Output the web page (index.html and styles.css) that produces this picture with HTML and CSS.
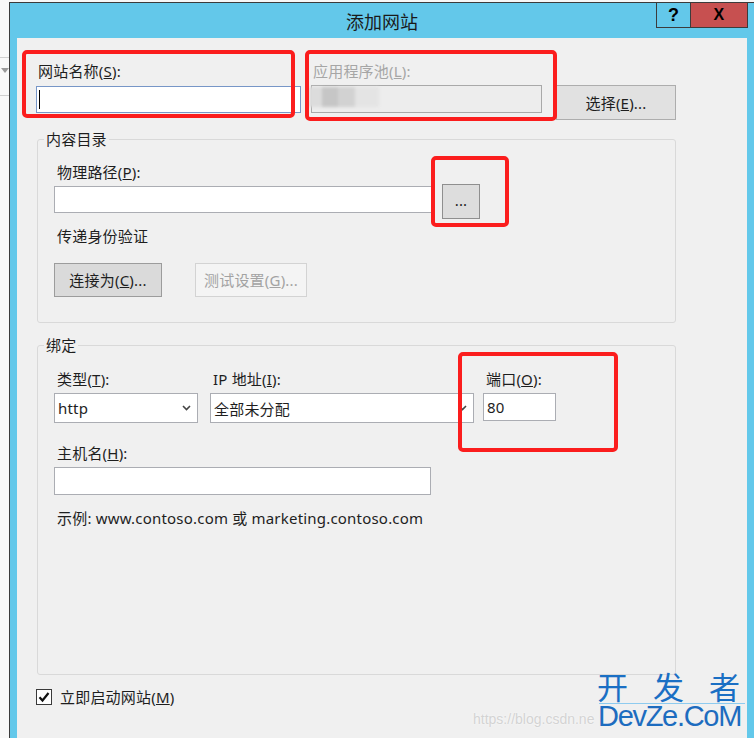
FILE: index.html
```html
<!DOCTYPE html>
<html lang="zh-CN">
<head>
<meta charset="utf-8">
<title>添加网站</title>
<link rel="stylesheet" href="styles.css">
</head>
<body>
<div class="screen">
  <div class="strip">
    <div class="strip-line"></div>
    <div class="strip-arrow"></div>
    <div class="strip-line second"></div>
  </div>
  <div class="window">
    <div class="titlebar">
      <div class="title">添加网站</div>
      <div class="caption">
        <div class="cap-btn help">?</div>
        <div class="cap-btn close">X</div>
      </div>
    </div>
    <div class="frame">
      <div class="client">
        <div class="top-grid">
          <div class="lbl">网站名称(<u>S</u>):</div>
          <div class="lbl disabled">应用程序池(<u>L</u>):</div>
          <div></div>
          <div class="input focused"><span class="caret"></span></div>
          <div class="input readonly"><span class="blur"></span></div>
          <div class="btn choose">选择(<u>E</u>)...</div>
        </div>

        <fieldset class="group content-dir">
          <legend>内容目录</legend>
          <div class="lbl">物理路径(<u>P</u>):</div>
          <div class="path-row">
            <div class="input path"></div>
            <div class="btn browse">...</div>
          </div>
          <div class="lbl pass">传递身份验证</div>
          <div class="btn-row">
            <div class="btn pressed">连接为(<u>C</u>)...</div>
            <div class="btn off">测试设置(<u>G</u>)...</div>
          </div>
        </fieldset>

        <fieldset class="group binding">
          <legend>绑定</legend>
          <div class="bind-grid">
            <div class="lbl">类型(<u>T</u>):</div>
            <div class="lbl">IP 地址(<u>I</u>):</div>
            <div class="lbl">端口(<u>O</u>):</div>
            <div class="select type"><span>http</span><svg class="chev" width="9" height="6" viewBox="0 0 9 6"><path d="M1 1l3.5 3.5L8 1" fill="none" stroke="#444" stroke-width="1.6"/></svg></div>
            <div class="select ip"><span>全部未分配</span><svg class="chev" width="9" height="6" viewBox="0 0 9 6"><path d="M1 1l3.5 3.5L8 1" fill="none" stroke="#444" stroke-width="1.6"/></svg></div>
            <div class="input port">80</div>
          </div>
          <div class="lbl host-lbl">主机名(<u>H</u>):</div>
          <div class="input host"></div>
          <div class="lbl example">示例: www.contoso.com 或 marketing.contoso.com</div>
        </fieldset>

        <div class="start-row">
          <svg class="check" width="16" height="16" viewBox="0 0 16 16">
            <rect x="0.5" y="0.5" width="15" height="15" fill="#fff" stroke="#3a3a3a"/>
            <path d="M3.5 8.2l3 3.3 6-7.5" fill="none" stroke="#111" stroke-width="2.2"/>
          </svg>
          <span class="start-lbl">立即启动网站(<u>M</u>)</span>
        </div>
      </div>
    </div>
  </div>

  <div class="mark r1"></div>
  <div class="mark r2"></div>
  <div class="mark r3"></div>
  <div class="mark r4"></div>

  <div class="csdn">https://blog.csdn.ne</div>
  <div class="wm-cn"><span>开</span><span>发</span><span>者</span></div>
  <div class="wm-line"></div>
  <div class="wm-en">DevZe.CoM</div>
</div>
</body>
</html>
```

FILE: styles.css
```css
* { box-sizing: border-box; }

html, body {
  margin: 0;
  padding: 0;
}

body {
  width: 754px;
  height: 738px;
  overflow: hidden;
  background: #f7f7f7;
  font-family: "Noto Sans", "Noto Sans CJK SC", sans-serif;
  font-size: 15px;
  letter-spacing: 0.2px;
  color: #1e1e1e;
}

.screen {
  position: relative;
  display: flex;
  width: 754px;
  height: 738px;
  overflow: hidden;
}

/* background window sliver */
.strip {
  flex: none;
  width: 9px;
  background: #f8f8f8;
  padding-top: 57px;
}
.strip-line { height: 1px; background: #cfcfcf; }
.strip-line.second { margin-top: 22px; }
.strip-arrow {
  margin: 10px 0 0 1px;
  width: 0;
  height: 0;
  border-left: 4px solid transparent;
  border-right: 4px solid transparent;
  border-top: 5px solid #9a9a9a;
}

/* window frame */
.window {
  flex: none;
  width: 745px;
  margin-top: 2px;
  border-left: 1px solid #3b3b3b;
  border-top: 1px solid #3b3b3b;
  background: #63c8ea;
}

.titlebar {
  height: 35px;
  display: grid;
  grid-template-columns: 1fr auto 1fr;
  align-items: center;
}
.title {
  grid-column: 2;
  font-family: "Noto Sans CJK SC", sans-serif;
  font-size: 18px;
  line-height: 24px;
  letter-spacing: 0;
  color: #1a1a1a;
}
.caption {
  grid-column: 3;
  justify-self: end;
  align-self: start;
  margin-right: 6px;
  display: flex;
  height: 25px;
  border: 1px solid #3c3c3c;
  border-top: none;
}
.cap-btn {
  display: flex;
  align-items: center;
  justify-content: center;
  font-family: "Liberation Sans", sans-serif;
  font-weight: bold;
  color: #000;
}
.help {
  width: 34px;
  border-right: 1px solid #3c3c3c;
  font-size: 18px;
}
.close {
  width: 56px;
  background: #c75050;
  font-size: 16px;
}

.frame {
  height: 700px;
  padding: 0 7px;
}
.client {
  height: 700px;
  background: #f0f0f0;
  padding-top: 23px;
}

/* common controls */
.lbl {
  line-height: 20px;
  padding-left: 2px;
  white-space: nowrap;
}
.disabled { color: #a6a6a6; }

.input {
  background: #fff;
  border: 1px solid #abadb3;
  height: 27px;
}
.btn {
  display: flex;
  align-items: center;
  justify-content: center;
  height: 35px;
  border: 1px solid #adadad;
  background: #e1e1e1;
  line-height: 20px;
  white-space: nowrap;
}

/* top row */
.top-grid {
  display: grid;
  grid-template-columns: 265px 231px 124px;
  column-gap: 10px;
  row-gap: 4px;
  margin-left: 19px;
  align-items: start;
}
.input.focused {
  margin-top: 1px;
  border-color: #7796c7;
  display: flex;
  align-items: center;
  padding-left: 2px;
}
.caret {
  width: 1px;
  height: 19px;
  background: #000;
}
.input.readonly {
  height: 28px;
  background: #ededed;
  border-color: #a9a9a9;
  padding-top: 1px;
}
.blur {
  display: block;
  width: 70px;
  height: 20px;
  margin-left: -3px;
  background: linear-gradient(90deg, #dcdcdc 0 18%, #c6c6c6 18% 42%, #d2d2d2 42% 66%, #e4e4e4 66% 100%);
  filter: blur(1.5px);
}
.btn.choose {
  width: 120px;
  margin-left: 4px;
}

/* group boxes */
.group {
  margin: 9px 0 0 20px;
  width: 639px;
  min-width: 0;
  border: 1px solid #d9d9d9;
  border-radius: 3px;
  padding: 13px 0 25px 16px;
}
.group legend {
  padding: 0 2px;
  margin-left: -10px;
  line-height: 20px;
}
.group .lbl { padding-left: 3px; }

.path-row {
  display: flex;
  align-items: flex-start;
  margin-top: 2px;
}
.input.path {
  width: 379px;
  margin-top: 2px;
}
.btn.browse {
  width: 38px;
  margin-left: 9px;
  background: #dddddd;
  border-color: #8f8f8f;
  padding-bottom: 4px;
}
.pass { margin-top: 7px; }

.btn-row {
  display: flex;
  gap: 33px;
  margin-top: 17px;
}
.btn.pressed {
  width: 108px;
  height: 34px;
  background: #dadada;
  border-color: #9c9c9c;
}
.btn.off {
  width: 112px;
  height: 34px;
  background: #f4f4f4;
  border-color: #d3d3d3;
  color: #a3a3a3;
}

.group.binding {
  margin-top: 12px;
  padding: 14px 0 146px 16px;
}
.bind-grid {
  display: grid;
  grid-template-columns: 156px 273px 73px;
  row-gap: 4px;
  align-items: start;
}
.select {
  height: 30px;
  background: #fff;
  border: 1px solid #abadb3;
  display: flex;
  align-items: center;
  justify-content: space-between;
  padding: 0 6px 0 3px;
}
.select.type { width: 144px; }
.select.ip { width: 264px; }
.input.port {
  height: 28px;
  display: flex;
  align-items: center;
  padding-left: 3px;
}
.host-lbl { margin-top: 20px; }
.input.host {
  width: 377px;
  height: 28px;
  margin-top: 4px;
}
.example { margin-top: 13px; }

.start-row {
  display: flex;
  align-items: center;
  height: 20px;
  margin: 12px 0 0 19px;
}
.start-lbl {
  margin-left: 8px;
  line-height: 20px;
}

/* red annotation boxes */
.mark {
  position: absolute;
  border: 4px solid #fb1d1d;
  border-radius: 5px;
}
.r1 { left: 22px; top: 50px; width: 273px; height: 68px; }
.r2 { left: 305px; top: 50px; width: 252px; height: 71px; }
.r3 { left: 431px; top: 156px; width: 78px; height: 71px; }
.r4 { left: 458px; top: 352px; width: 160px; height: 100px; }

/* watermark */
.csdn {
  position: absolute;
  left: 473px;
  top: 709px;
  font-family: "Liberation Sans", sans-serif;
  font-size: 14px;
  line-height: 20px;
  letter-spacing: 0;
  color: #d3d3d3;
  text-shadow: 0 0 2px #fff;
  white-space: nowrap;
}
.wm-cn {
  position: absolute;
  left: 597px;
  top: 670px;
  display: flex;
  gap: 25px;
  font-family: "Noto Sans CJK SC", sans-serif;
  font-size: 31px;
  line-height: 31px;
  letter-spacing: 0;
  color: #1a6fc4;
  white-space: nowrap;
}
.wm-line {
  position: absolute;
  left: 599px;
  top: 703px;
  width: 146px;
  height: 1px;
  background: #8ecbef;
}
.wm-en {
  position: absolute;
  left: 598px;
  top: 703px;
  font-family: "Liberation Sans", sans-serif;
  font-size: 29px;
  line-height: 26px;
  letter-spacing: -1.3px;
  color: #1d6cbf;
  white-space: nowrap;
}
```
